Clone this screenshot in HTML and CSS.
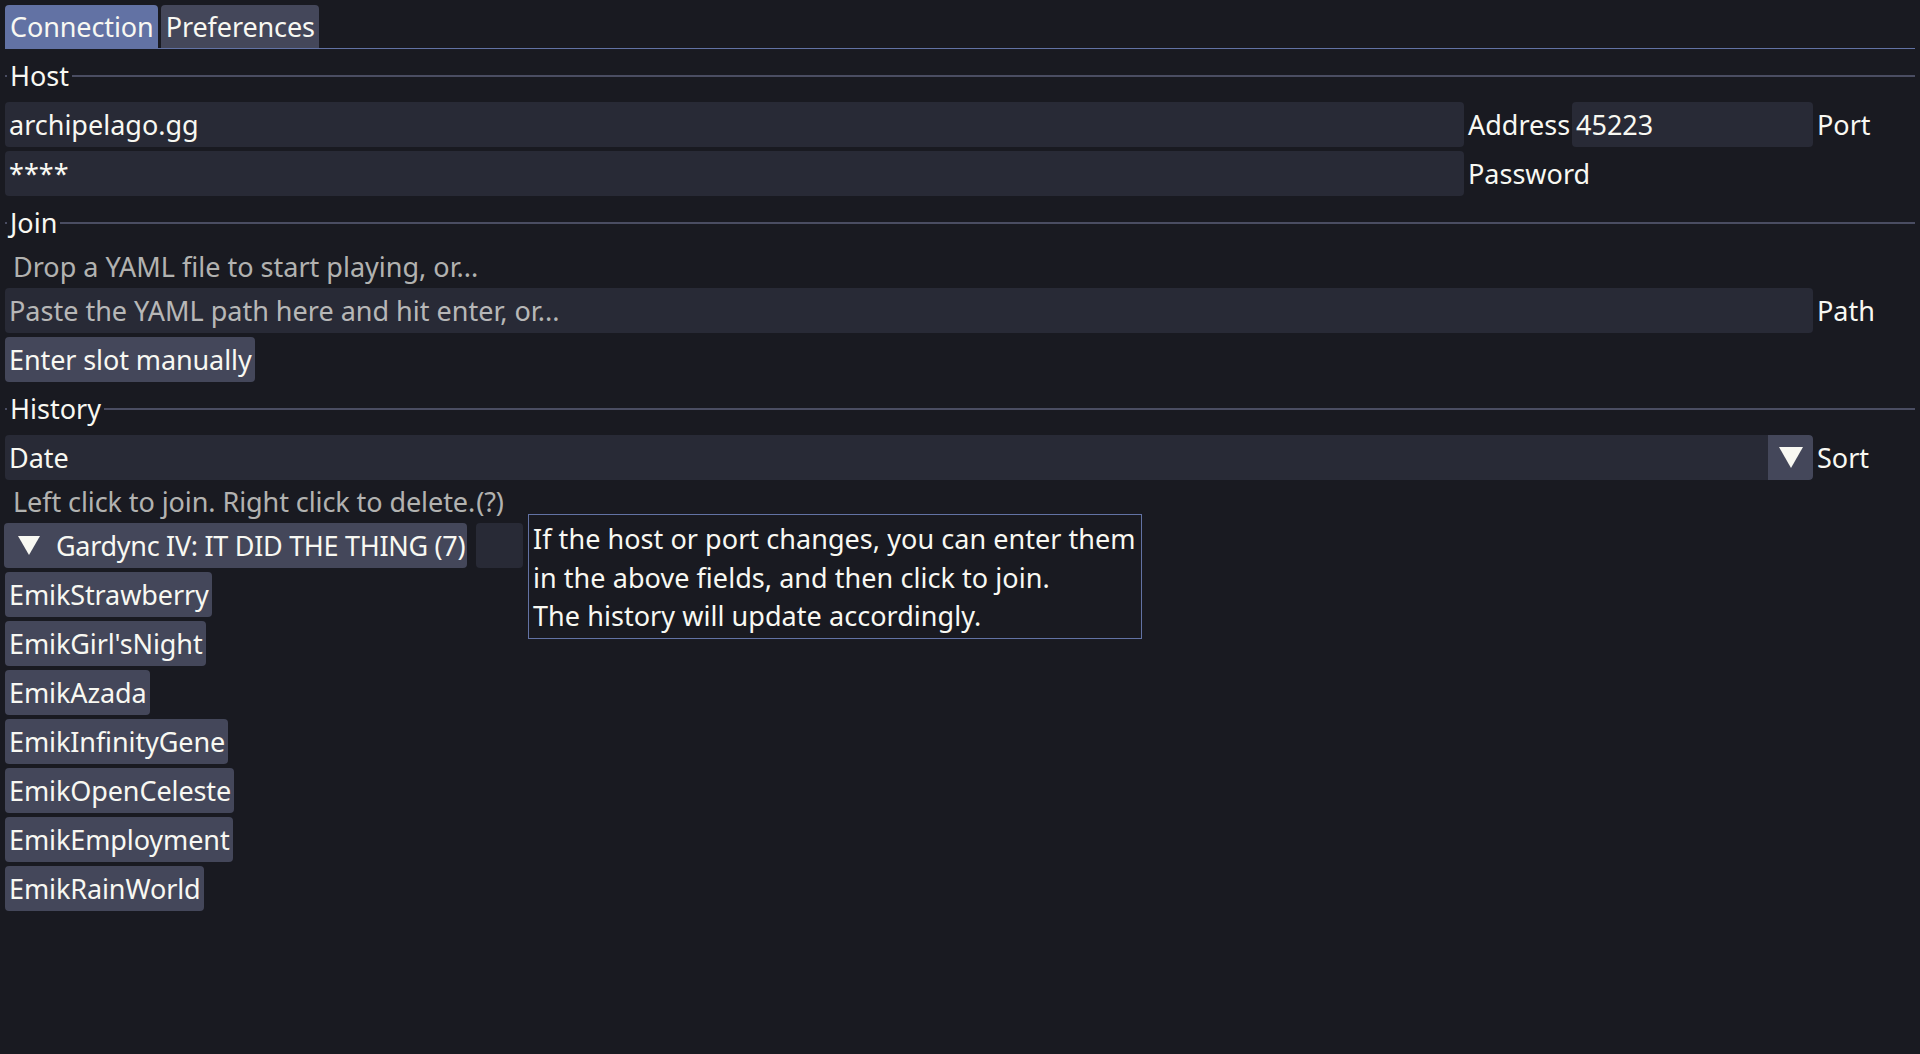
FILE: index.html
```html
<!DOCTYPE html>
<html lang="en">
<head>
<meta charset="utf-8">
<title>Archipelago Client</title>
<link rel="stylesheet" href="styles.css">
</head>
<body>
<div class="app">
  <div class="tabbar">
    <div class="tab tab-active">Connection</div>
    <div class="tab">Preferences</div>
  </div>
  <div class="content">
    <div class="sep"><span class="sep-cap"></span><span class="sep-title">Host</span><span class="sep-line"></span></div>
    <div class="host-grid">
      <div class="field">archipelago.gg</div>
      <div class="lbl">Address</div>
      <div class="field">45223</div>
      <div class="lbl">Port</div>
      <div class="field">****</div>
      <div class="lbl lbl-wide">Password</div>
    </div>

    <div class="sep"><span class="sep-cap"></span><span class="sep-title">Join</span><span class="sep-line"></span></div>
    <div class="note">Drop a YAML file to start playing, or...</div>
    <div class="pair-grid">
      <div class="field placeholder">Paste the YAML path here and hit enter, or...</div>
      <div class="lbl">Path</div>
    </div>
    <div class="btn-row"><div class="btn">Enter slot manually</div></div>

    <div class="sep"><span class="sep-cap"></span><span class="sep-title">History</span><span class="sep-line"></span></div>
    <div class="pair-grid">
      <div class="field select">
        <span class="select-text">Date</span>
        <span class="select-arrow"><svg width="24" height="21" viewBox="0 0 24 21"><polygon points="0,0 24,0 12,21" fill="#f8f8f2"/></svg></span>
      </div>
      <div class="lbl">Sort</div>
    </div>
    <div class="note note-tight">Left click to join. Right click to delete.<span class="help">(?)</span></div>

    <div class="group-row">
      <div class="btn btn-group"><svg class="tri" width="22" height="19" viewBox="0 0 22 19"><polygon points="0,0 22,0 11,19" fill="#f8f8f2"/></svg><span class="group-title">Gardync IV: IT DID THE THING (7)</span></div>
      <div class="empty-box"></div>
    </div>
    <div class="btn-row"><div class="btn">EmikStrawberry</div></div>
    <div class="btn-row"><div class="btn">EmikGirl'sNight</div></div>
    <div class="btn-row"><div class="btn">EmikAzada</div></div>
    <div class="btn-row"><div class="btn">EmikInfinityGene</div></div>
    <div class="btn-row"><div class="btn">EmikOpenCeleste</div></div>
    <div class="btn-row"><div class="btn">EmikEmployment</div></div>
    <div class="btn-row"><div class="btn">EmikRainWorld</div></div>
  </div>

  <div class="tooltip">If the host or port changes, you can enter them<br>in the above fields, and then click to join.<br>The history will update accordingly.</div>
</div>
</body>
</html>
```

FILE: styles.css
```css
* { box-sizing: border-box; }

html, body {
  margin: 0;
  padding: 0;
  background: #191a21;
}

body {
  font-family: "Noto Sans", "DejaVu Sans", sans-serif;
  font-size: 27px;
  color: #f8f8f2;
  width: 1920px;
  height: 1054px;
  overflow: hidden;
}

.app {
  position: relative;
  padding: 5px 5px 0 5px;
}

.tabbar {
  display: flex;
  gap: 3px;
  height: 44px;
  border-bottom: 1px solid #6272a4;
}

.tab {
  height: 43px;
  padding: 0 4px 0 5px;
  display: flex;
  align-items: center;
  background: #44475a;
  border-radius: 4px 4px 0 0;
  line-height: 35px;
  white-space: nowrap;
  letter-spacing: -0.1px;
}

.tab-active {
  background: #6272a4;
}

.content {
  display: flex;
  flex-direction: column;
  gap: 4px;
  padding-top: 4px;
}

.sep {
  height: 45px;
  display: flex;
  align-items: center;
  gap: 2px;
}

.sep-cap {
  width: 2px;
  height: 2px;
  background: #4a4d62;
}

.sep-title {
  line-height: 35px;
  padding: 0 1px;
}

.sep-line {
  flex: 1;
  height: 2px;
  background: #4a4d62;
}

.host-grid {
  display: grid;
  grid-template-columns: 1fr 100px 241px 98px;
  column-gap: 4px;
  row-gap: 4px;
}

.pair-grid {
  display: grid;
  grid-template-columns: 1fr 98px;
  column-gap: 4px;
}

.field {
  height: 45px;
  background: #282a36;
  border-radius: 4px;
  padding: 0 4px;
  display: flex;
  align-items: center;
  line-height: 35px;
  white-space: nowrap;
  overflow: hidden;
}

.placeholder {
  color: rgba(248, 248, 242, 0.7);
}

.lbl {
  height: 45px;
  display: flex;
  align-items: center;
  line-height: 35px;
  white-space: nowrap;
}

.lbl-wide {
  grid-column: 2 / 5;
}

.note {
  height: 35px;
  line-height: 35px;
  padding-left: 8px;
  color: rgba(248, 248, 242, 0.7);
  white-space: nowrap;
}

.note-tight {
  letter-spacing: -0.08px;
}

.help {
  margin-left: 1px;
}

.btn-row {
  display: flex;
}

.btn {
  height: 45px;
  background: #44475a;
  border-radius: 4px;
  padding: 0 3px 0 4px;
  display: flex;
  align-items: center;
  line-height: 35px;
  white-space: nowrap;
  letter-spacing: -0.1px;
}

.select {
  padding-right: 0;
  justify-content: space-between;
}

.select-arrow {
  width: 45px;
  height: 45px;
  background: #44475a;
  border-radius: 0 4px 4px 0;
  display: flex;
  align-items: center;
  justify-content: center;
}

.group-row {
  display: flex;
  gap: 9px;
  margin-left: -1px;
}

.btn-group {
  padding: 0 2px 0 14px;
  gap: 16px;
}

.group-title {
  letter-spacing: -0.3px;
}

.tri {
  flex: none;
}

.empty-box {
  width: 47px;
  height: 45px;
  background: #282a36;
  border-radius: 4px;
}

.tooltip {
  position: absolute;
  left: 528px;
  top: 514px;
  border: 1px solid #6272a4;
  background: #191a21;
  padding: 5px 5px 2px 4px;
  line-height: 38.5px;
  white-space: nowrap;
  letter-spacing: 0.05px;
}
```
